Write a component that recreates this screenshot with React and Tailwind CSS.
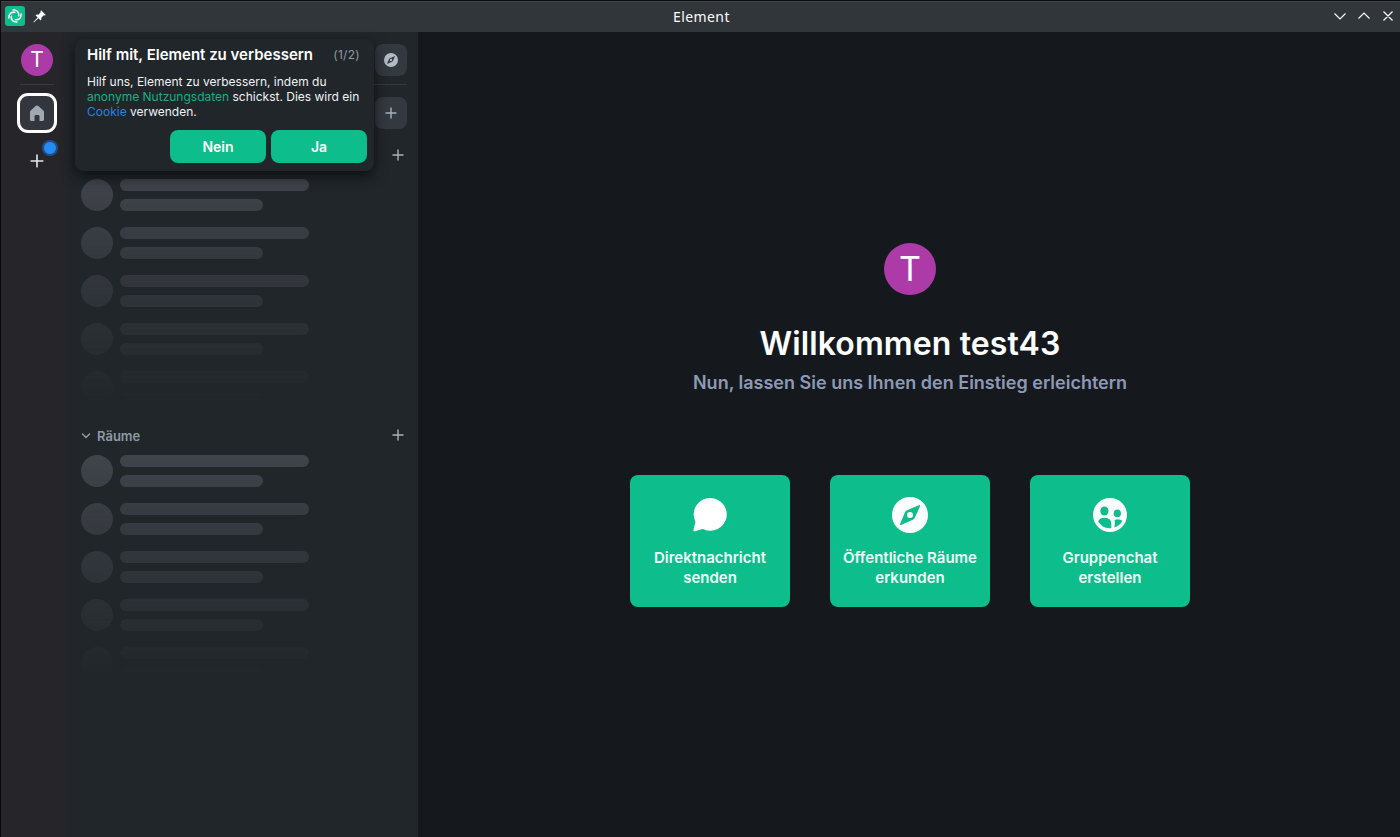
import React from "react";

function Plus({ className }) {
  return (
    <svg className={className} viewBox="0 0 12 12" fill="none" stroke="currentColor" strokeWidth="1.4" strokeLinecap="round">
      <path d="M6 1v10M1 6h10" />
    </svg>
  );
}

function Compass({ className }) {
  return (
    <svg className={className} viewBox="0 0 36 36" fill="currentColor">
      <path
        fillRule="evenodd"
        d="M18 0a18 18 0 1 1 0 36a18 18 0 0 1 0-36ZM27 8.200L15 13.200Q13.600 13.800 13 15.200L8 27Q7.600 28.300 8.900 27.900L20.900 22.700Q22.200 22.100 22.800 20.800L28.100 9Q28.500 7.700 27 8.200ZM18 15a3 3 0 1 1 0 6a3 3 0 0 1 0-6Z"
      />
    </svg>
  );
}

function ChatBubble() {
  return (
    <svg className="h-9 w-9" viewBox="0 0 36 36" fill="#fff">
      <path d="M18.500 1A16.400 16.400 0 1 1 11.500 32.300Q10.500 31.900 9.500 32.200L3.200 34.300Q1.100 34.900 1.500 32.800L3.200 26Q3.500 25 3.100 24A16.400 16.400 0 0 1 18.500 1Z" />
    </svg>
  );
}

function Group() {
  return (
    <svg className="h-9 w-9" viewBox="0 0 36 36">
      <circle cx="18" cy="18" r="17" fill="#fff" />
      <g fill="#0dbd8b">
        <ellipse cx="12.400" cy="14" rx="4.100" ry="4.500" />
        <ellipse cx="25.300" cy="16.300" rx="3.600" ry="3.900" />
        <path d="M6.200 24.500Q7.200 20.700 12.500 20.700Q19.300 20.700 19.300 27V31.200Q10.500 32 6.200 24.500Z" />
        <path d="M22.700 22.900Q27 21.300 30.200 23.800Q29.500 27.600 22.500 30.500Q23 26.500 22.700 22.900Z" />
      </g>
    </svg>
  );
}

function Logo() {
  return (
    <svg className="h-5 w-5" viewBox="0 0 20 20">
      <rect width="20" height="20" rx="3" fill="#0dbd8b" />
      <g fill="none" stroke="#fff" strokeWidth="1.500" strokeLinecap="round">
        <path d="M8.100 3.900C12 3.700 14.300 6.200 13.700 9.800" />
        <path d="M16.100 8.100C16.300 12 13.800 14.300 10.200 13.700" />
        <path d="M11.900 16.100C8 16.300 5.700 13.800 6.300 10.200" />
        <path d="M3.900 11.900C3.700 8 6.200 5.700 9.800 6.300" />
      </g>
    </svg>
  );
}

function Skeleton() {
  return (
    <div className="flex h-60 flex-col [mask-image:linear-gradient(180deg,black,transparent_94%)]">
      {[0, 1, 2, 3, 4].map((i) => (
        <div key={i} className="flex h-12 shrink-0 gap-[7px]">
          <div className="h-8 w-8 rounded-full bg-[#40444b]" />
          <div className="flex flex-col gap-2">
            <div className="h-3 w-[189px] rounded-md bg-[#40444b]" />
            <div className="h-3 w-[143px] rounded-md bg-[#40444b]" />
          </div>
        </div>
      ))}
    </div>
  );
}

function TitleBar() {
  return (
    <header className="flex h-8 shrink-0 items-center border-t border-[#0b0d0f] bg-[#31363b] pr-[6px] pb-px pl-1 text-[#fcfcfc] shadow-[inset_0_1px_0_#3d4247]">
      <div className="flex w-[66px] items-center gap-2">
        <Logo />
        <svg className="h-[13px] w-[13px]" viewBox="0 0 12 12" fill="currentColor">
          <path d="M7.500 0.200L11.800 4.500L10.800 5.100L9.900 4.900L7.700 7.100Q8 8.700 7.100 9.700L5 7.600L0.800 11.500L0.400 11.100L4.300 6.900L2.300 4.900Q3.300 4 4.900 4.300L7.100 2.100L6.900 1.200Z" />
        </svg>
      </div>
      <div className="flex-1 pt-px text-center font-['Noto_Sans',sans-serif] text-[14px] leading-5 tracking-[0.400px]">Element</div>
      <svg className="h-3 w-[62px]" viewBox="0 0 62 12" fill="none" stroke="currentColor" strokeWidth="1.200">
        <path d="M2.500 3.500L8 9L13.500 3.500M26.500 8.500L32 3L37.500 8.500M51.500 1.500L60.500 10.500M60.500 1.500L51.500 10.500" />
      </svg>
    </header>
  );
}

function SpacePanel() {
  return (
    <nav className="flex w-[67px] shrink-0 flex-col items-center bg-linear-to-r from-[#25252a] from-90% to-[#22262a] pt-3 pl-[5px]">
      <div className="flex w-full flex-col items-center">
        <div className="h-8 w-8 rounded-full bg-[#ac3ba8] text-center text-[21px] leading-8 text-white">T</div>
        <div className="mt-2 h-px w-[34px] bg-[#393a3f]" />
        <div className="mt-2 flex h-10 w-10 items-center justify-center rounded-[11px] border-3 border-white bg-[#33373d] text-[#a0a8b1]">
          <svg className="h-4 w-[14px]" viewBox="0 0 14 16" fill="currentColor">
            <path d="M0 7Q0 6.100 0.700 5.500L5.900 0.800Q7 0 8.100 0.800L13.300 5.500Q14 6.100 14 7V14.500Q14 16 12.500 16H9.500V11.500Q9.500 10 8.500 10H5.500Q4.500 10 4.500 11.500V16H1.500Q0 16 0 14.500Z" />
          </svg>
        </div>
        <div className="relative mt-[21px] h-[14px] w-[14px] text-[#e3e5e8]">
          <Plus className="h-[14px] w-[14px]" />
          <div className="absolute -top-[14px] left-[12px] h-4 w-4 rounded-full border-2 border-[#1f4f86] bg-[#238cf5]" />
        </div>
      </div>
    </nav>
  );
}

function Toast() {
  return (
    <section className="absolute top-[7px] left-[74px] h-[132px] w-[299px] rounded-lg bg-[#20262a] px-3 shadow-[0_5px_14px_rgba(0,0,0,0.6)]">
      <div className="flex items-center justify-between pt-[6px] pr-[2px]">
        <h2 className="text-[15px] leading-5 font-semibold whitespace-nowrap text-white">Hilf mit, Element zu verbessern</h2>
        <span className="text-xs leading-5 tracking-[0.300px] text-[#8e99a4]">(1/2)</span>
      </div>
      <p className="mt-[9px] text-xs leading-[15px] whitespace-nowrap text-[#f0f2f4]">
        Hilf uns, Element zu verbessern, indem du
        <br />
        <span className="text-[#17b084]">anonyme Nutzungsdaten</span> schickst. Dies wird ein
        <br />
        <span className="text-[#2683e2]">Cookie</span> verwenden.
      </p>
      <div className="mt-[11px] -mr-[5px] flex justify-end gap-[5px] text-sm font-semibold text-white">
        <button className="h-[33px] w-24 rounded-lg bg-[#0dbd8b]">Nein</button>
        <button className="h-[33px] w-24 rounded-lg bg-[#0dbd8b]">Ja</button>
      </div>
    </section>
  );
}

function RoomList() {
  return (
    <aside className="flex w-[350px] shrink-0 flex-col bg-[#20262a] pr-[11px] pl-[13px]">
      <div className="flex justify-end pt-3">
        <div className="flex h-8 w-8 items-center justify-center rounded-lg bg-[#33393f] text-[#b3bcc5]">
          <Compass className="h-[14px] w-[14px]" />
        </div>
      </div>
      <div className="mt-2 h-px bg-[#33383d]" />
      <div className="mt-3 flex justify-end">
        <div className="flex h-8 w-8 items-center justify-center rounded-lg bg-[#33393f] text-[#a9b2bc]">
          <Plus className="h-3 w-3" />
        </div>
      </div>
      <div className="mt-5 flex h-3 justify-end pr-[3px] text-[#a9b2bc]">
        <Plus className="h-3 w-3" />
      </div>
      <div className="mt-[18px]">
        <Skeleton />
      </div>
      <div className="mt-[7px] flex h-5 items-center pr-[3px] text-[#8e99a4]">
        <svg className="h-[6px] w-[10px]" viewBox="0 0 10 6" fill="none" stroke="currentColor" strokeWidth="1.500" strokeLinecap="round" strokeLinejoin="round">
          <path d="M1.500 1L5 4.500L8.500 1" />
        </svg>
        <h3 className="ml-[6px] flex-1 text-[13px] leading-5 font-semibold">Räume</h3>
        <Plus className="mb-[2px] h-3 w-3 text-[#a9b2bc]" />
      </div>
      <div className="mt-[9px]">
        <Skeleton />
      </div>
    </aside>
  );
}

function Action({ icon, first, second }) {
  return (
    <button className="flex h-[132px] w-40 flex-col items-center rounded-lg bg-[#0dbd8b] pt-[22px] text-[15px] leading-5 font-semibold text-[#edfff9]">
      {icon}
      <span className="mt-[15px] whitespace-nowrap">
        {first}
        <br />
        {second}
      </span>
    </button>
  );
}

export default function App() {
  return (
    <div className="relative flex h-[837px] w-[1400px] flex-col overflow-hidden border-l border-[#08090b] bg-[#15191e] font-['Inter',sans-serif]">
      <TitleBar />
      <div className="relative flex min-h-0 flex-1">
        <SpacePanel />
        <RoomList />
        <main className="flex flex-1 flex-col items-center bg-[#15191e] pt-[211px] pl-[2px]">
          <div className="h-[52px] w-[52px] rounded-full bg-[#ac3ba8] text-center text-[34px] leading-[52px] text-white">T</div>
          <h1 className="mt-[27px] text-[32px] leading-[44px] font-semibold tracking-[0.100px] text-white">Willkommen test43</h1>
          <h2 className="mt-[5px] text-lg leading-6 font-semibold text-[#8d99b5]">Nun, lassen Sie uns Ihnen den Einstieg erleichtern</h2>
          <div className="mt-[80px] flex gap-10">
            <Action icon={<ChatBubble />} first="Direktnachricht" second="senden" />
            <Action icon={<Compass className="h-9 w-9 text-white" />} first="Öffentliche Räume" second="erkunden" />
            <Action icon={<Group />} first="Gruppenchat" second="erstellen" />
          </div>
        </main>
        <Toast />
      </div>
    </div>
  );
}
